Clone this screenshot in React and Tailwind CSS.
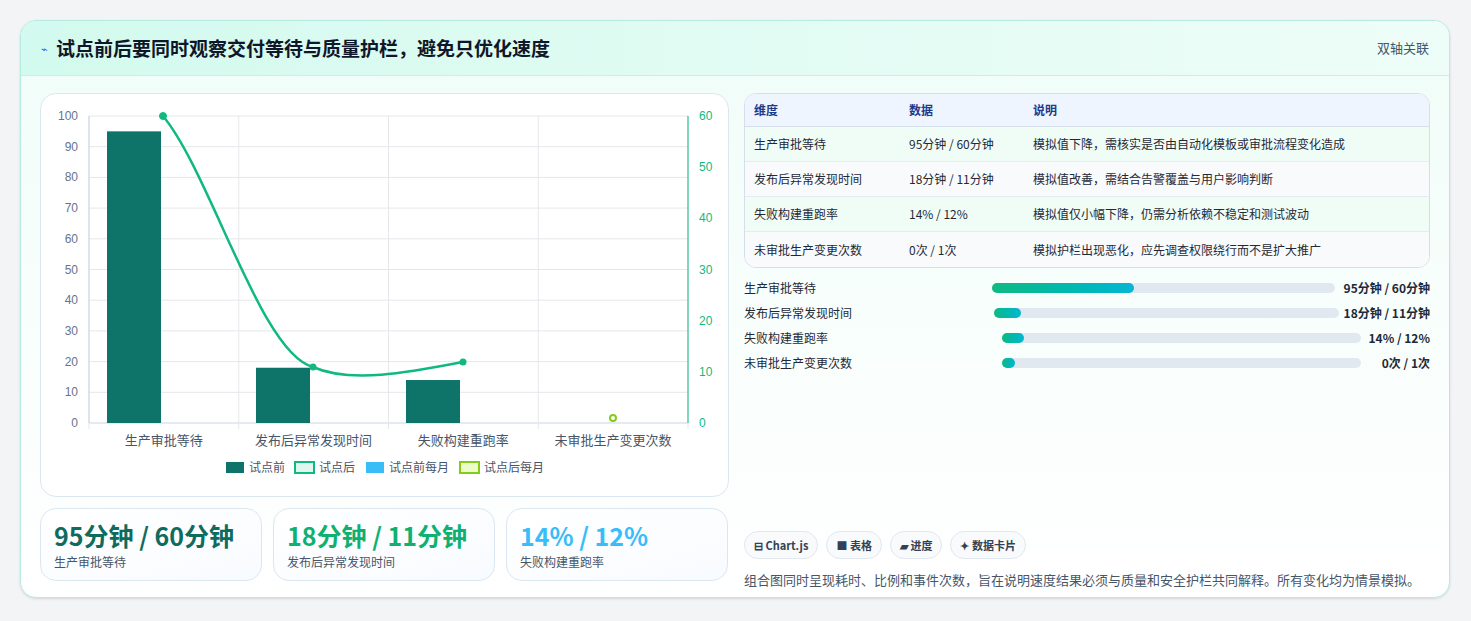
export default function App() {
  const f = { fontFamily: '"Noto Sans CJK SC","Noto Sans",sans-serif' };
  const X0 = 48, X1 = 647, Y0 = 329, Y1 = 22;
  const yl = (v) => Y0 - (v / 100) * (Y0 - Y1);
  const yr = (v) => Y0 - (v / 60) * (Y0 - Y1);
  const cw = (X1 - X0) / 4;
  const rows = [
    ["生产审批等待", "95分钟 / 60分钟", "模拟值下降，需核实是否由自动化模板或审批流程变化造成"],
    ["发布后异常发现时间", "18分钟 / 11分钟", "模拟值改善，需结合告警覆盖与用户影响判断"],
    ["失败构建重跑率", "14% / 12%", "模拟值仅小幅下降，仍需分析依赖不稳定和测试波动"],
    ["未审批生产变更次数", "0次 / 1次", "模拟护栏出现恶化，应先调查权限绕行而不是扩大推广"],
  ];
  const bars = [
    ["生产审批等待", "95分钟 / 60分钟", 248, 142, 343],
    ["发布后异常发现时间", "18分钟 / 11分钟", 250, 27, 345],
    ["失败构建重跑率", "14% / 12%", 258, 22, 359],
    ["未审批生产变更次数", "0次 / 1次", 258, 13, 359],
  ];
  return (
    <div style={f} className="w-[1471px] h-[621px] bg-[#f3f4f6] pt-[20px] pl-[20px]">
      <div className="w-[1430px] h-[578px] rounded-2xl border border-[#b7ebe0] bg-gradient-to-b from-[#f0fdf8] to-white overflow-hidden shadow-sm">
        <div className="h-[55px] flex items-center justify-between px-[20px] bg-gradient-to-r from-[#d3faee] to-[#eefdf8] border-b border-[#c9f0e4]">
          <div className="flex items-center gap-[8px]">
            <span className="text-[#2563eb] text-[11px]">⌁</span>
            <span className="text-[19px] font-bold text-[#0f172a]">试点前后要同时观察交付等待与质量护栏，避免只优化速度</span>
          </div>
          <span className="text-[13px] text-[#475569]">双轴关联</span>
        </div>
        <div className="flex gap-[15px] px-[19px] pt-[17px]">
          <div className="w-[689px] flex flex-col gap-[11px]">
            <div className="h-[404px] rounded-2xl border border-[#dbe7f0] bg-white">
              <svg width="688" height="403" className="block">
                {[0,10,20,30,40,50,60,70,80,90,100].map((v) => (
                  <g key={v}>
                    <line x1={X0} x2={X1} y1={yl(v)} y2={yl(v)} stroke={v===0?"#cbd5e1":"#e5e7eb"} />
                    <text x={37} y={yl(v)+4} textAnchor="end" fontSize="12" fill="#64748b" fontFamily="Liberation Sans">{v}</text>
                  </g>
                ))}
                {[0,10,20,30,40,50,60].map((v) => (
                  <text key={v} x={658} y={yr(v)+4} fontSize="12" fill="#10b981" fontFamily="Liberation Sans">{v}</text>
                ))}
                {[0,1,2,3,4].map((i) => (
                  <line key={i} x1={X0+i*cw} x2={X0+i*cw} y1={Y1} y2={Y0+6} stroke="#e5e7eb" />
                ))}
                <line x1={X0} x2={X0} y1={Y1} y2={Y0} stroke="#cbd5e1" />
                <line x1={X1} x2={X1} y1={Y1} y2={Y0} stroke="#10b981" />
                {[[66,95],[215,18],[365,14]].map(([x,v],i)=>(
                  <rect key={i} x={x} y={yl(v)} width={54} height={Y0-yl(v)} fill="#0e7369" />
                ))}
                <path d="M122 22 C 170 80, 220 260, 272 273 C 310 290, 370 278, 422 268" fill="none" stroke="#10b981" strokeWidth="2.5" />
                <circle cx="122" cy="22" r="3.5" fill="#10b981" stroke="#10b981" />
                <circle cx="272" cy="273" r="3.5" fill="#10b981" />
                <circle cx="422" cy="268" r="3.5" fill="#10b981" />
                <circle cx="572" cy="324" r="3" fill="#fff" stroke="#84cc16" strokeWidth="2" />
                {["生产审批等待","发布后异常发现时间","失败构建重跑率","未审批生产变更次数"].map((t,i)=>(
                  <text key={t} x={X0+cw*i+cw/2} y={351} textAnchor="middle" fontSize="13" fill="#475569">{t}</text>
                ))}
                <g fontSize="12" fill="#475569">
                  <rect x="185" y="368" width="18" height="11" fill="#0e7369" />
                  <text x="208" y="378">试点前</text>
                  <rect x="254" y="368" width="19" height="11" fill="#e0f7ef" stroke="#10b981" strokeWidth="2" />
                  <text x="278" y="378">试点后</text>
                  <rect x="325" y="368" width="18" height="11" fill="#38bdf8" />
                  <text x="348" y="378">试点前每月</text>
                  <rect x="419" y="368" width="19" height="11" fill="#ecfccb" stroke="#84cc16" strokeWidth="2" />
                  <text x="443" y="378">试点后每月</text>
                </g>
              </svg>
            </div>
            <div className="flex gap-[11px]">
              {[["95分钟 / 60分钟","生产审批等待","text-[#0e6b5e]"],["18分钟 / 11分钟","发布后异常发现时间","text-[#10b070]"],["14% / 12%","失败构建重跑率","text-[#38bdf8]"]].map(([a,b,c])=>(
                <div key={b} className="w-[222px] h-[73px] rounded-2xl border border-[#dbe7f0] bg-gradient-to-br from-white to-[#f8fbff] px-[13px] pt-[9px]">
                  <div className={`text-[25px] font-bold leading-[34px] ${c}`}>{a}</div>
                  <div className="text-[12px] text-[#475569] mt-[1px]">{b}</div>
                </div>
              ))}
            </div>
          </div>
          <div className="w-[689px] flex flex-col">
            <div className="rounded-xl border border-[#d5dfec] overflow-hidden bg-white text-[12px]">
              <div className="flex h-[33px] items-center bg-[#eef5ff] border-b border-[#d5dfec] text-[#1e3a8a] font-semibold">
                <div className="w-[164px] pl-[9px]">维度</div><div className="w-[124px]">数据</div><div>说明</div>
              </div>
              {rows.map((r,i)=>(
                <div key={i} className={`flex h-[35px] items-center text-[#1f2937] ${i<3?"border-b border-[#e5ebf2]":""} ${i%2===0?"bg-[#f0fdf6]":"bg-[#f8fafc]"}`}>
                  <div className="w-[164px] pl-[9px]">{r[0]}</div><div className="w-[124px]">{r[1]}</div><div>{r[2]}</div>
                </div>
              ))}
            </div>
            <div className="mt-[10px] flex flex-col gap-[6px]">
              {bars.map(([n,v,start,fill,w])=>(
                <div key={n} className="flex items-center h-[19px] text-[12px] text-[#1f2937]">
                  <div style={{width:start}}>{n}</div>
                  <div className="h-[10px] rounded-full bg-[#e2e8f0]" style={{width:w}}>
                    <div className="h-full rounded-full bg-gradient-to-r from-[#10b981] to-[#06b6d4]" style={{width:fill}} />
                  </div>
                  <div className="ml-auto font-semibold">{v}</div>
                </div>
              ))}
            </div>
            <div className="mt-[159px] flex gap-[8px] text-[11px] font-semibold text-[#334155]">
              {["⊟ Chart.js","■ 表格","▰ 进度","✦ 数据卡片"].map(t=>(
                <div key={t} className="h-[28px] px-[9px] flex items-center rounded-full border border-[#e2e8f0] bg-[#f8fafc]">{t}</div>
              ))}
            </div>
            <div className="mt-[11px] text-[13px] text-[#475569]">组合图同时呈现耗时、比例和事件次数，旨在说明速度结果必须与质量和安全护栏共同解释。所有变化均为情景模拟。</div>
          </div>
        </div>
      </div>
    </div>
  );
}
